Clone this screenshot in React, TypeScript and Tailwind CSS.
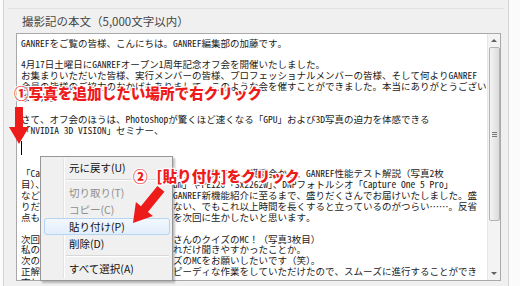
const lines: string[] = [
  "GANREFをご覧の皆様、こんにちは。GANREF編集部の加藤です。",
  "",
  "4月17日土曜日にGANREFオープン1周年記念オフ会を開催いたしました。",
  "お集まりいただいた皆様、実行メンバーの皆様、プロフェッショナルメンバーの皆様、そして何よりGANREF",
  "会員の皆様のご協力のおかげもありまして、このような会を催すことができました。本当にありがとうござい",
  "ました。",
  "",
  "さて、オフ会のほうは、Photoshopが驚くほど速くなる「GPU」および3D写真の迫力を体感できる",
  "「NVIDIA 3D VISION」セミナー、",
  "",
  "",
  "",
  "「Capture NX 2」のデモンストレーションに始まり、講演会から、GANREF性能テスト解説（写真2枚",
  "目）、各社新製品の紹介「EOS Premium」やPE120「Sx2262w」、DNPフォトルシオ「Capture One 5 Pro」",
  "など、各社の新製品のデモに続いてGANREF新機能紹介に至るまで、盛りだくさんでお届けいたしました。盛",
  "りだくさんで、時間がまだまだ足りない、でもこれ以上時間を長くすると立っているのがつらい……。反省",
  "点もありましたので、皆様のご意見を次回に生かしたいと思います。",
  "",
  "次回の目玉は、なんといっても佐藤さんのクイズのMC！（写真3枚目）",
  "私の司会進行に比べて、彼の話がどれだけ聞きやすかったことか。",
  "次のオフ会も、ぜひ佐藤さんにクイズのMCをお願いしたいです（笑）。",
  "正解発表の際も、運営スタッフがスピーディな作業をしていただけたので、スムーズに進行することができ",
  "直したと思います。",
];

const MenuItem = (props: { label: string; disabled?: boolean; active?: boolean }) => (
  <div className="h-[17px] relative flex items-center">
    {props.active && (
      <div className="absolute left-[1px] right-[0px] top-0 bottom-0 rounded-[3px] border border-[#b4d4f1] bg-gradient-to-b from-[#f2f8fe] to-[#e2eefb]" />
    )}
    <span className={`relative pl-[26px] text-[10.5px] ${props.disabled ? "text-[#8f8f8f]" : "text-[#111]"}`}>
      {props.label}
    </span>
  </div>
);

const Separator = () => (
  <div className="h-[8px] flex items-center pl-[23px] pr-[1px]">
    <div className="h-px w-full bg-[#d8d8d8] border-b border-white box-content" />
  </div>
);

export default function App() {
  return (
    <div className="relative w-[520px] h-[286px] overflow-hidden bg-[#fbfbfb] font-['Noto_Sans_CJK_JP',sans-serif]">
      <div className="ml-[3px] w-[506px] h-full bg-[#f0f0f0] border-l border-r border-[#d3d3d3] flex flex-col">
        <div className="mt-[8px] mx-[4px] h-px bg-[#e2e2e2]" />
        <div className="h-[24px] pl-[18px] pt-[2px] flex items-center text-[11.5px] text-[#474747]">
          撮影記の本文（5,000文字以内）
        </div>
        <div className="ml-[12px] w-[485px] h-[248px] border border-[#a9a9a9] bg-white flex">
          <div className="flex-1 overflow-hidden pl-[4px] pt-[3.5px] text-[9.5px] leading-[10.9px] text-[#1a1a1a] font-['Noto_Sans_Mono_CJK_JP','Noto_Sans_CJK_JP',monospace]">
            {lines.map((l, i) => (
              <div key={i} className="relative h-[10.9px] whitespace-nowrap">
                {i === 10 && <span className="absolute left-0 top-[-5px] h-[14px] w-px bg-black" />}
                {l}
              </div>
            ))}
          </div>
          <div className="w-[13px] bg-[#f3f3f3] border-l border-[#e6e6e6] flex flex-col items-center">
            <div className="h-[13px] w-full flex items-center justify-center">
              <div className="w-0 h-0 border-l-[3px] border-r-[3px] border-b-[3px] border-l-transparent border-r-transparent border-b-[#606060]" />
            </div>
            <div className="w-[11px] h-[174px] rounded-[2px] border border-[#b3b3b3] bg-gradient-to-r from-[#f4f4f4] to-[#dcdcdc] flex flex-col items-center justify-center gap-[1px]">
              <div className="w-[5px] h-px bg-[#7a7a7a]" />
              <div className="w-[5px] h-px bg-[#7a7a7a]" />
              <div className="w-[5px] h-px bg-[#7a7a7a]" />
            </div>
            <div className="flex-1" />
            <div className="h-[13px] w-full flex items-center justify-center">
              <div className="w-0 h-0 border-l-[3px] border-r-[3px] border-t-[3px] border-l-transparent border-r-transparent border-t-[#606060]" />
            </div>
          </div>
        </div>
      </div>

      {/* context menu */}
      <div className="absolute left-[40px] top-[156px] w-[133px] h-[125px] border border-[#979797] bg-[#f0f0f0] p-[2px] shadow-[2px_2px_2px_rgba(0,0,0,0.25)]">
        <div className="absolute left-[22px] top-[2px] bottom-[2px] w-px bg-[#e2e2e2] border-r border-white box-content" />
        <MenuItem label="元に戻す(U)" />
        <Separator />
        <MenuItem label="切り取り(T)" disabled />
        <MenuItem label="コピー(C)" disabled />
        <MenuItem label="貼り付け(P)" active />
        <MenuItem label="削除(D)" />
        <Separator />
        <MenuItem label="すべて選択(A)" />
      </div>

      {/* callouts */}
      <div className="absolute left-[14px] top-[82px] text-[14.6px] leading-[22px] font-black text-[#ee1b1b] whitespace-nowrap [text-shadow:1px_1px_0_#fff,-1px_-1px_0_#fff,1px_-1px_0_#fff,-1px_1px_0_#fff,0_0_3px_#fff,0_0_2px_#fff]">
        ①写真を追加したい場所で右クリック
      </div>
      <div className="absolute left-[133px] top-[166px] text-[14.6px] leading-[20px] font-black text-[#ee1b1b] whitespace-nowrap [text-shadow:1px_1px_0_#fff,-1px_-1px_0_#fff,1px_-1px_0_#fff,-1px_1px_0_#fff,0_0_3px_#fff,0_0_2px_#fff]">
        ②<span className="ml-[9px]">[貼り付け]をクリック</span>
      </div>
      <svg className="absolute inset-0 pointer-events-none" width="520" height="286" viewBox="0 0 520 286">
        <polygon points="15,107 23,107 23,127 29,127 19,144 9,127 15,127" fill="#ee1b1b" />
        <polygon
          points="133,223 152.9,216.1 147.9,211.9 164.4,191.7 157.4,186.1 140.9,206.3 135.9,202.1"
          fill="#ee1b1b"
        />
      </svg>
    </div>
  );
}
